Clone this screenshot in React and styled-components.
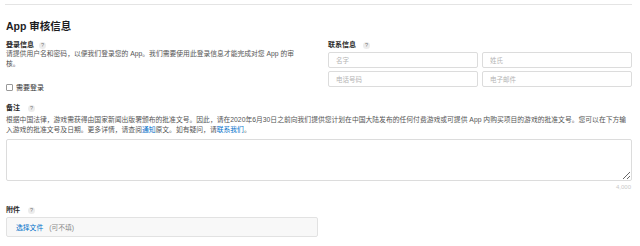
import React from 'react';
import styled, { createGlobalStyle } from 'styled-components';

const GlobalStyle = createGlobalStyle`
  body {
    margin: 0;
    background: #fff;
    font-family: "Liberation Sans", "Noto Sans CJK SC", sans-serif;
    color: #333;
  }
`;

const Page = styled.div`
  width: 626px;
  padding: 4px 0 0 6px;
`;

const Divider = styled.div`
  height: 1px;
  margin-left: -1px;
  background: #e4e4e4;
`;

const Title = styled.h1`
  margin: 15px 0 0;
  font-size: 10.5px;
  line-height: 13px;
  font-weight: bold;
  color: #1d1d1f;
`;

const Columns = styled.div`
  display: grid;
  grid-template-columns: 312px 304px;
  column-gap: 10px;
  margin-top: 8px;
`;

const Column = styled.div`
  display: flex;
  flex-direction: column;
`;

const Label = styled.div`
  display: flex;
  align-items: center;
  gap: ${(p) => p.gap || 5}px;
  font-size: 7px;
  line-height: 8px;
  font-weight: bold;
  color: #2a2a2a;
`;

const Help = styled.span`
  width: 7px;
  height: 7px;
  border-radius: 50%;
  background: #ececec;
  color: #777;
  font-size: 5.5px;
  line-height: 7px;
  font-weight: normal;
  text-align: center;
`;

const Desc = styled.p`
  margin: ${(p) => p.top || 0}px 0 0;
  max-width: ${(p) => p.width}px;
  font-size: 6.8px;
  line-height: ${(p) => p.lh || 10}px;
  color: #555;
`;

const Link = styled.a`
  color: #0070c9;
  text-decoration: none;
`;

const CheckRow = styled.label`
  display: flex;
  align-items: center;
  gap: 3px;
  margin-top: 14px;
  font-size: 7px;
  line-height: 9px;
  color: #333;
`;

const Box = styled.span`
  width: 5px;
  height: 5px;
  border: 1px solid #999;
  border-radius: 1px;
  background: #fff;
`;

const Inputs = styled.div`
  display: grid;
  grid-template-columns: 150px 150px;
  gap: 3px 4px;
  margin-top: 3px;
`;

const Input = styled.input`
  box-sizing: border-box;
  height: 16px;
  width: 100%;
  padding: 0 7px;
  border: 1px solid #dcdcdc;
  border-radius: 2px;
  font-family: inherit;
  font-size: 6.5px;
  outline: none;
  &::placeholder {
    color: #b4b4b4;
  }
`;

const Section = styled.div`
  margin-top: ${(p) => p.top}px;
`;

const Notes = styled.textarea`
  display: block;
  box-sizing: border-box;
  width: 626px;
  height: 42px;
  margin-top: 4px;
  border: 1px solid #dcdcdc;
  border-radius: 2px;
  font-family: inherit;
  font-size: 7px;
  outline: none;
`;

const Count = styled.div`
  margin-top: 2px;
  padding-right: 1px;
  text-align: right;
  font-size: 6px;
  line-height: 8px;
  color: #c9c9c9;
`;

const FileBox = styled.div`
  box-sizing: border-box;
  display: flex;
  align-items: center;
  gap: 6px;
  width: 312px;
  height: 20px;
  margin-top: 3px;
  padding-left: 9px;
  border: 1px solid #e2e2e2;
  border-radius: 2px;
  background: #f8f8f8;
  font-size: 6.8px;
`;

const FileLink = styled.span`
  color: #0070c9;
`;

const Hint = styled.span`
  color: #8a8a8a;
`;

export default function App() {
  return (
    <>
      <GlobalStyle />
      <Page>
        <Divider />
        <Title>App 审核信息</Title>
        <Columns>
          <Column>
            <Label>登录信息<Help>?</Help></Label>
            <Desc width={294}>
              请提供用户名和密码，以便我们登录您的 App。我们需要使用此登录信息才能完成对您 App 的审核。
            </Desc>
            <CheckRow><Box />需要登录</CheckRow>
          </Column>
          <Column>
            <Label gap={7}>联系信息<Help>?</Help></Label>
            <Inputs>
              <Input placeholder="名字" />
              <Input placeholder="姓氏" />
              <Input placeholder="电话号码" />
              <Input placeholder="电子邮件" />
            </Inputs>
          </Column>
        </Columns>
        <Section top={12}>
          <Label gap={8}>备注<Help>?</Help></Label>
          <Desc top={3} lh={10} width={626}>
            根据中国法律，游戏需获得由国家新闻出版署颁布的批准文号。因此，请在2020年6月30日之前向我们提供您计划在中国大陆发布的任何付费游戏或可提供 App 内购买项目的游戏的批准文号。您可以在下方输入游戏的批准文号及日期。更多详情，请查阅<Link>通知</Link>原文。如有疑问，请<Link>联系我们</Link>。
          </Desc>
          <Notes />
          <Count>4,000</Count>
        </Section>
        <Section top={15}>
          <Label gap={8}>附件<Help>?</Help></Label>
          <FileBox>
            <FileLink>选择文件</FileLink>
            <Hint>(可不填)</Hint>
          </FileBox>
        </Section>
      </Page>
    </>
  );
}
